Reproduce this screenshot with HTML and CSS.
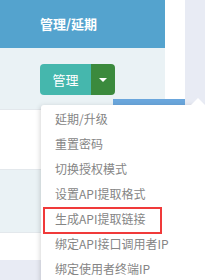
FILE: index.html
```html
<!DOCTYPE html>
<html lang="zh-CN">
<head>
  <meta charset="UTF-8">
  <meta name="viewport" content="width=device-width, initial-scale=1.0">
  <title>管理/延期</title>
  <link rel="stylesheet" href="styles.css">
</head>
<body>
  <div class="panel">
    <div class="table">
      <div class="head">管理/延期</div>
      <div class="row row-first">
        <div class="btn-group">
          <button class="btn-main">管理</button>
          <button class="btn-toggle"><span class="caret"></span></button>
        </div>
      </div>
      <div class="row row-white"></div>
      <div class="row row-light"></div>
      <div class="row row-last"></div>
    </div>
  </div>

  <div class="scroll-bar"></div>

  <ul class="menu">
    <li>延期/升级</li>
    <li>重置密码</li>
    <li>切换授权模式</li>
    <li>设置API提取格式</li>
    <li>生成API提取链接</li>
    <li>绑定API接口调用者IP</li>
    <li>绑定使用者终端IP</li>
    <div class="highlight"></div>
  </ul>
</body>
</html>
```

FILE: styles.css
```css
* {
  box-sizing: border-box;
}

body {
  margin: 0;
  width: 205px;
  height: 280px;
  overflow: hidden;
  position: relative;
  background-color: #e8ebf4;
  font-family: "Noto Sans CJK SC", "Noto Sans", sans-serif;
}

.panel {
  width: 185px;
  padding-right: 20px;
  background-color: #fff;
}

.table {
  width: 165px;
}

.head {
  height: 48px;
  line-height: 48px;
  padding-left: 40px;
  background-color: #54a3ce;
  color: #fff;
  font-size: 13px;
  font-weight: bold;
}

.row {
  border-bottom: 1px solid #e3e8ec;
}

.row-first {
  height: 62px;
  padding: 16px 0 0 40px;
  background-color: #eaf2f5;
}

.row-white {
  height: 60px;
  background-color: #fff;
}

.row-light {
  height: 63px;
  background-color: #eaf2f5;
}

.row-last {
  height: 27px;
  background-color: #fff;
  border-bottom: none;
}

.btn-group {
  display: flex;
  height: 31px;
}

.btn-group button {
  border: none;
  margin: 0;
  padding: 0;
  color: #fff;
  font-family: inherit;
  font-size: 13px;
}

.btn-main {
  width: 51px;
  background-color: #45b7ad;
  border-radius: 4px 0 0 4px;
}

.btn-toggle {
  width: 24px;
  background-color: #3b8a3d;
  border-radius: 0 4px 4px 0;
  display: flex;
  align-items: center;
  justify-content: center;
}

.caret {
  width: 0;
  height: 0;
  border-left: 4px solid transparent;
  border-right: 4px solid transparent;
  border-top: 4px solid #fff;
}

.scroll-bar {
  position: absolute;
  left: 113px;
  top: 99px;
  width: 72px;
  height: 6px;
  background-color: #6aa6dc;
}

.menu {
  position: absolute;
  left: 41px;
  top: 105px;
  width: 164px;
  margin: 0;
  padding: 1px 0 6px;
  list-style: none;
  background-color: #fff;
  border-radius: 3px 0 0 3px;
  box-shadow: -1px 1px 5px rgba(0, 0, 0, 0.16);
}

.menu::before {
  content: "";
  position: absolute;
  left: 150px;
  top: -7px;
  border-left: 7px solid transparent;
  border-right: 7px solid transparent;
  border-bottom: 7px solid #fff;
}

.menu li {
  height: 25px;
  line-height: 25px;
  padding-left: 14px;
  color: #858585;
  font-size: 12px;
  white-space: nowrap;
}

.highlight {
  position: absolute;
  left: 2px;
  top: 102px;
  width: 119px;
  height: 27px;
  border: 2px solid #f03a3a;
}
```
